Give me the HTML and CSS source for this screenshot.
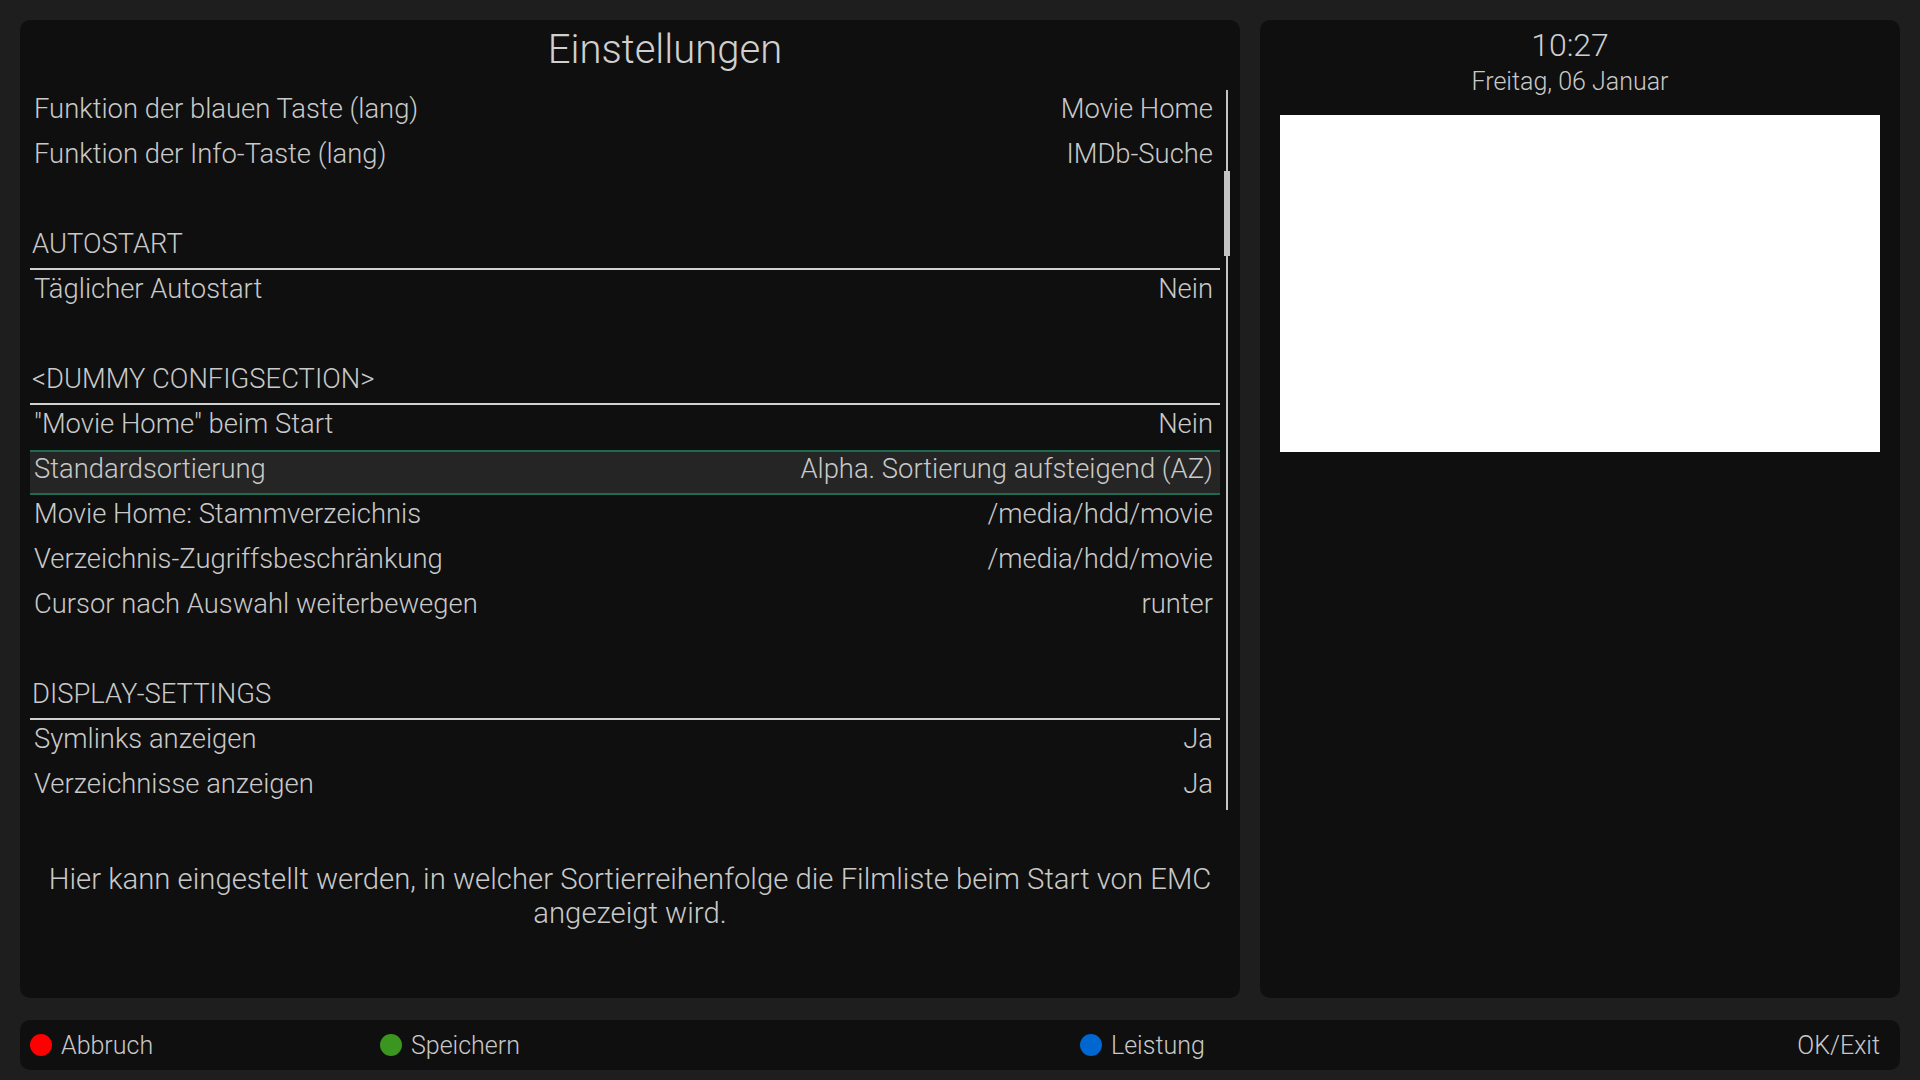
FILE: index.html
```html
<!DOCTYPE html>
<html lang="de">
<head>
  <meta charset="UTF-8" />
  <title>Einstellungen</title>
  <link rel="stylesheet" href="styles.css">
</head>
<body>

  <div class="main">
    <!-- left: settings list -->
    <div class="panel settings">
      <div class="title">Einstellungen</div>

      <div class="listwrap">
        <div class="list">
          <div class="row"><span>Funktion der blauen Taste (lang)</span><span>Movie Home</span></div>
          <div class="row"><span>Funktion der Info-Taste (lang)</span><span>IMDb-Suche</span></div>
          <div class="row"></div>
          <div class="row section">AUTOSTART</div>
          <div class="row"><span>Täglicher Autostart</span><span>Nein</span></div>
          <div class="row"></div>
          <div class="row section">&lt;DUMMY CONFIGSECTION&gt;</div>
          <div class="row"><span>"Movie Home" beim Start</span><span>Nein</span></div>
          <div class="row selected"><span>Standardsortierung</span><span>Alpha. Sortierung aufsteigend (AZ)</span></div>
          <div class="row"><span>Movie Home: Stammverzeichnis</span><span>/media/hdd/movie</span></div>
          <div class="row"><span>Verzeichnis-Zugriffsbeschränkung</span><span>/media/hdd/movie</span></div>
          <div class="row"><span>Cursor nach Auswahl weiterbewegen</span><span>runter</span></div>
          <div class="row"></div>
          <div class="row section">DISPLAY-SETTINGS</div>
          <div class="row"><span>Symlinks anzeigen</span><span>Ja</span></div>
          <div class="row"><span>Verzeichnisse anzeigen</span><span>Ja</span></div>
        </div>
        <div class="scrollbar"><div class="thumb"></div></div>
      </div>

      <div class="desc">
        Hier kann eingestellt werden, in welcher Sortierreihenfolge die Filmliste beim Start von EMC<br>
        angezeigt wird.
      </div>
    </div>

    <!-- right: clock + preview -->
    <div class="panel side">
      <div class="clock">
        <div class="time">10:27</div>
        <div class="date">Freitag, 06 Januar</div>
      </div>
      <div class="preview"></div>
    </div>
  </div>

  <!-- colour key bar -->
  <div class="footer">
    <div class="key"><span class="dot red"></span>Abbruch</div>
    <div class="key"><span class="dot green"></span>Speichern</div>
    <div class="key"></div>
    <div class="key"><span class="dot blue"></span>Leistung</div>
    <div class="okexit">OK/Exit</div>
  </div>

</body>
</html>
```

FILE: styles.css
```css
html, body {
  margin: 0;
  padding: 0;
}

body {
  width: 1920px;
  height: 1080px;
  box-sizing: border-box;
  padding: 20px 20px 0 20px;
  background: #1e1e1e;
  color: #c9c9c9;
  font-family: Roboto, "Liberation Sans", sans-serif;
  font-weight: 300;
  overflow: hidden;
}

/* two panels side by side */
.main {
  display: flex;
  gap: 20px;
  height: 978px;
}

.panel {
  background: #0f0f0f;
  border-radius: 10px;
}

.settings {
  width: 1220px;
}

.side {
  width: 640px;
  box-sizing: border-box;
  padding: 5px 20px 0 20px;
}

/* title, a bit right of centre like the skin */
.title {
  height: 70px;
  line-height: 59px;
  padding-left: 70px;
  text-align: center;
  font-size: 40px;
  color: #d0d0d0;
}

.listwrap {
  display: flex;
  margin: 0 10px;
  height: 720px;
}

.list {
  width: 1190px;
}

.row {
  height: 45px;
  line-height: 38px;
  box-sizing: border-box;
  padding: 0 7px 0 4px;
  display: flex;
  justify-content: space-between;
  font-size: 27.4px;
  white-space: nowrap;
}

.row.section {
  padding-left: 2px;
  border-bottom: 2px solid #d2d2d2;
}

.row.selected {
  background: #252525;
  box-shadow: inset 0 2px 0 #1e6b4f, inset 0 -2px 0 #1e6b4f;
}

/* scrollbar: thin track + small thumb */
.scrollbar {
  position: relative;
  width: 10px;
}
.scrollbar::before {
  content: "";
  position: absolute;
  left: 6px;
  top: 0;
  bottom: 0;
  width: 2px;
  background: #c4c4c4;
}
.thumb {
  position: absolute;
  left: 4px;
  top: 81px;
  width: 6px;
  height: 85px;
  background: #c4c4c4;
}

.desc {
  margin: 52px 10px 0 10px;
  line-height: 34px;
  font-size: 29.3px;
  text-align: center;
}

/* right side */
.clock {
  padding-right: 20px;
  text-align: center;
}
.time {
  font-size: 32px;
  line-height: 41px;
  color: #cfcfcf;
}
.date {
  font-size: 25px;
  line-height: 32px;
}

.preview {
  margin-top: 17px;
  width: 600px;
  height: 337px;
  background: #ffffff;
}

/* footer key bar */
.footer {
  margin-top: 22px;
  height: 50px;
  background: #0f0f0f;
  border-radius: 10px;
  display: flex;
  align-items: center;
  padding: 0 20px 0 10px;
  font-size: 25px;
}

.key {
  width: 350px;
  display: flex;
  align-items: center;
  gap: 9px;
}

.dot {
  width: 22px;
  height: 22px;
  border-radius: 50%;
}
.dot.red { background: #ff0000; }
.dot.green { background: #3a961e; }
.dot.blue { background: #0066d0; }

.okexit {
  margin-left: auto;
}
```
